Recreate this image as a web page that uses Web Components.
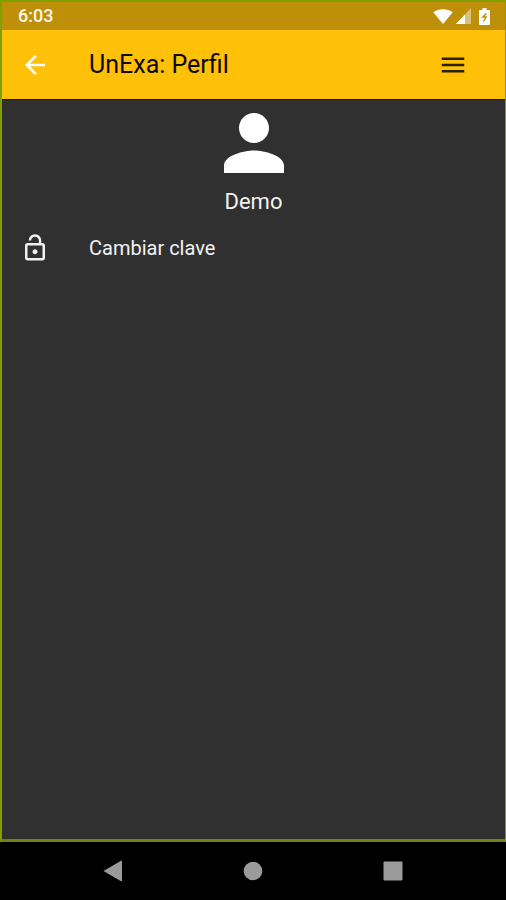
<!DOCTYPE html>
<html lang="es">
<head>
<meta charset="utf-8">
<meta name="viewport" content="width=device-width, initial-scale=1">
<title>UnExa: Perfil</title>
<style>
  html, body { margin: 0; height: 100%; background: #000; }
  body { font-family: Roboto, "Liberation Sans", sans-serif; }
</style>
</head>
<body>
<phone-screen>
  <status-bar slot="status" time="6:03"></status-bar>
  <app-bar slot="bar">UnExa: Perfil</app-bar>
  <user-profile>Demo</user-profile>
  <action-row>Cambiar clave</action-row>
  <nav-bar slot="nav"></nav-bar>
</phone-screen>
<script>
class BaseElement extends HTMLElement {
  connectedCallback() {
    if (this.shadowRoot) return;
    this.attachShadow({ mode: 'open' }).innerHTML =
      '<style>*{box-sizing:border-box}svg{display:block}button{display:grid;place-items:center;margin:0;padding:0;border:0;background:none;color:inherit;font:inherit;cursor:pointer}</style>' + this.view();
  }
}

customElements.define('phone-screen', class extends BaseElement {
  view() {
    return `<style>
      :host { display: flex; flex-direction: column; min-height: 100vh; }
      .window { flex: 1; display: flex; flex-direction: column; background: #303030;
        border: solid #7f9f04; border-width: 2px 1px 3px 2px; border-bottom-color: #6f8512; }
      main { flex: 1; border-top: 1px solid #1d1a14; }
    </style>
    <div class="window">
      <slot name="status"></slot><slot name="bar"></slot>
      <main><slot></slot></main>
    </div>
    <slot name="nav"></slot>`;
  }
});

customElements.define('status-bar', class extends BaseElement {
  view() {
    return `<style>
      :host { display: flex; justify-content: space-between; align-items: center; height: 28px;
        padding: 0 15px 0 16px; background: #be9009; color: #fff8e8; font-size: 18px; line-height: 28px; font-weight: 500; }
      .icons { display: flex; align-items: center; gap: 3px; color: #fff; }
      .battery { margin-left: 5px; }
    </style>
    <span>${this.getAttribute('time')}</span>
    <div class="icons">
      <svg width="20" height="16" viewBox="0 0 20 16" aria-hidden="true"><path fill="currentColor" d="M10 16 0.300 4.200C5.500.2 14.500.2 19.700 4.200z"/></svg>
      <svg width="15" height="16" viewBox="0 0 15 16" aria-hidden="true"><path fill="#d9c07b" d="M0 16 15 0v16z"/><path fill="currentColor" d="M0 16 9 6.400V16z"/></svg>
      <svg class="battery" width="11" height="17" viewBox="0 0 11 17" aria-hidden="true"><path fill="currentColor" d="M3.500 0h4v2H10a1 1 0 0 1 1 1v13a1 1 0 0 1-1 1H1a1 1 0 0 1-1-1V3a1 1 0 0 1 1-1h2.500z"/><path fill="none" stroke="#be9009" stroke-width="1.400" d="M7.500 5.500 3.800 9H7.200L4.500 13.500"/></svg>
    </div>`;
  }
});

customElements.define('app-bar', class extends BaseElement {
  view() {
    return `<style>
      :host { display: flex; align-items: center; height: 69px; padding: 0 37px 0 18px; background: #ffc107; }
      .back { color: #fff; }
      h1 { flex: 1; margin: 0 0 0 39px; font-size: 25px; line-height: 33px; font-weight: 400; color: #0d0a00; }
      .menu { color: #2a2002; }
    </style>
    <button class="back" aria-label="Volver"><svg width="30" height="30" viewBox="0 0 24 24" fill="currentColor"><path d="M20 11H7.830l5.590-5.590L12 4l-8 8 8 8 1.410-1.410L7.830 13H20v-2z"/></svg></button>
    <h1><slot></slot></h1>
    <button class="menu" aria-label="Menú"><svg width="30" height="30" viewBox="0 0 24 24" fill="currentColor"><path d="M3 18h18v-2H3v2zm0-5h18v-2H3v2zm0-7v2h18V6H3z"/></svg></button>`;
  }
});

customElements.define('user-profile', class extends BaseElement {
  view() {
    return `<style>
      :host { display: flex; flex-direction: column; align-items: center; padding-bottom: 2px; }
      svg { color: #fff; margin-top: -2px; }
      h2 { margin: 0; font-size: 22px; line-height: 28px; font-weight: 400; color: #f2f2f2; }
    </style>
    <svg width="90" height="90" viewBox="0 0 24 24" fill="currentColor" aria-hidden="true"><path d="M12 12c2.210 0 4-1.790 4-4s-1.790-4-4-4-4 1.790-4 4 1.790 4 4 4zm0 2c-2.670 0-8 1.340-8 4v2h16v-2c0-2.660-5.330-4-8-4z"/></svg>
    <h2><slot></slot></h2>`;
  }
});

customElements.define('action-row', class extends BaseElement {
  view() {
    return `<style>
      :host { display: block; }
      button { display: flex; align-items: center; gap: 39px; width: 100%; height: 60px; padding: 0 18px;
        color: #f2f2f2; font-size: 20px; line-height: 28px; text-align: left; }
    </style>
    <button><svg width="30" height="30" viewBox="0 0 24 24" fill="currentColor" aria-hidden="true"><path d="M12 17c1.100 0 2-.9 2-2s-.9-2-2-2-2 .9-2 2 .9 2 2 2zm6-9h-1V6c0-2.760-2.240-5-5-5S7 3.240 7 6h1.900c0-1.710 1.390-3.100 3.100-3.100 1.710 0 3.100 1.390 3.100 3.100v2H6c-1.100 0-2 .9-2 2v10c0 1.100.9 2 2 2h12c1.100 0 2-.9 2-2V10c0-1.100-.9-2-2-2zm0 12H6V10h12v10z"/></svg><span><slot></slot></span></button>`;
  }
});

customElements.define('nav-bar', class extends BaseElement {
  view() {
    return `<style>
      :host { display: flex; justify-content: center; gap: 92px; height: 58px; background: #000; color: #9b9b9b; }
      button { width: 48px; height: 58px; }
    </style>
    <button aria-label="Atrás"><svg width="20" height="22" viewBox="0 0 20 22" fill="currentColor"><path d="M0.500 11 18 .8q1-.5 1 .6v19.200q0 1.100-1 .6z"/></svg></button>
    <button aria-label="Inicio"><svg width="20" height="20" viewBox="0 0 20 20" fill="currentColor"><circle cx="10" cy="10" r="9.300"/></svg></button>
    <button aria-label="Recientes"><svg width="20" height="20" viewBox="0 0 20 20" fill="currentColor"><rect x=".5" y=".5" width="19" height="19" rx="1"/></svg></button>`;
  }
});
</script>
</body>
</html>
